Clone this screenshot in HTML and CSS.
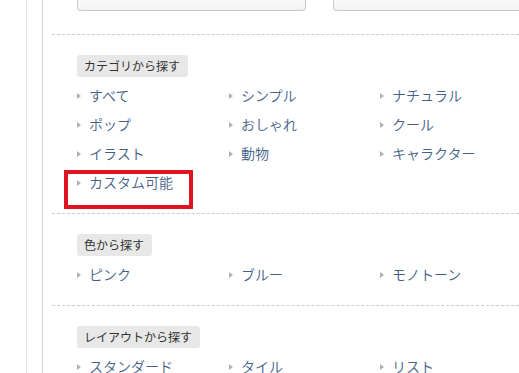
FILE: index.html
```html
<!DOCTYPE html>
<html lang="ja">
<head>
  <meta charset="UTF-8" />
  <title>テンプレートを探す</title>
  <link rel="stylesheet" href="styles.css">
</head>
<body>
  <div class="frame">
    <div class="main">

      <div class="search-row">
        <div class="search-box"></div>
        <div class="search-box wide"></div>
      </div>

      <div class="section">
        <div class="tag">カテゴリから探す</div>
        <ul class="links">
          <li><a href="#">すべて</a></li>
          <li><a href="#">シンプル</a></li>
          <li><a href="#">ナチュラル</a></li>
          <li><a href="#">ポップ</a></li>
          <li><a href="#">おしゃれ</a></li>
          <li><a href="#">クール</a></li>
          <li><a href="#">イラスト</a></li>
          <li><a href="#">動物</a></li>
          <li><a href="#">キャラクター</a></li>
          <li class="marked"><a href="#">カスタム可能</a></li>
        </ul>
      </div>

      <div class="section">
        <div class="tag">色から探す</div>
        <ul class="links">
          <li><a href="#">ピンク</a></li>
          <li><a href="#">ブルー</a></li>
          <li><a href="#">モノトーン</a></li>
        </ul>
      </div>

      <div class="section">
        <div class="tag">レイアウトから探す</div>
        <ul class="links">
          <li><a href="#">スタンダード</a></li>
          <li><a href="#">タイル</a></li>
          <li><a href="#">リスト</a></li>
        </ul>
      </div>

    </div>
  </div>
</body>
</html>
```

FILE: styles.css
```css
body {
  margin: 0;
  background-color: #ffffff;
  font-family: "Noto Sans CJK JP", "Noto Sans", sans-serif;
  overflow: hidden;
}
.frame {
  margin-left: 26px;
  border-left: 1px solid #e4e4e4;
  padding-left: 15px;
  height: 373px;
}
.main {
  border-left: 1px solid #d2d2d2;
  padding-left: 9px;
  height: 100%;
}
.search-row {
  display: flex;
  gap: 27px;
  padding-left: 25px;
  padding-bottom: 23px;
  border-bottom: 1px dashed #cccccc;
}
.search-box {
  width: 227px;
  height: 10px;
  background: linear-gradient(#fafafa, #f2f2f2);
  border: 1px solid #c8c8c8;
  border-top: none;
  border-radius: 0 0 4px 4px;
}
.search-box.wide {
  flex: 1;
  border-right: none;
  border-radius: 0 0 0 4px;
}
.section {
  padding: 20px 0 16px 25px;
  border-bottom: 1px dashed #cccccc;
}
.tag {
  width: fit-content;
  background-color: #e8e8e8;
  color: #333333;
  font-size: 12px;
  line-height: 22px;
  padding: 0 8px 0 7px;
  border-radius: 3px;
}
.links {
  list-style: none;
  margin: 4px 0 0;
  padding: 0;
  display: grid;
  grid-template-columns: 152px 151px 1fr;
}
.links li {
  line-height: 29px;
  font-size: 14px;
  font-weight: 350;
  position: relative;
  padding-left: 12px;
}
.links li::before {
  content: "";
  position: absolute;
  left: 0;
  top: 12px;
  border-left: 4px solid #b0b0b0;
  border-top: 3px solid transparent;
  border-bottom: 3px solid transparent;
}
.links a {
  color: #445f88;
  text-decoration: none;
}
.marked::after {
  content: "";
  position: absolute;
  left: -13px;
  top: 2px;
  width: 129px;
  height: 39px;
  box-sizing: border-box;
  border: 4px solid #e0141e;
}
```
